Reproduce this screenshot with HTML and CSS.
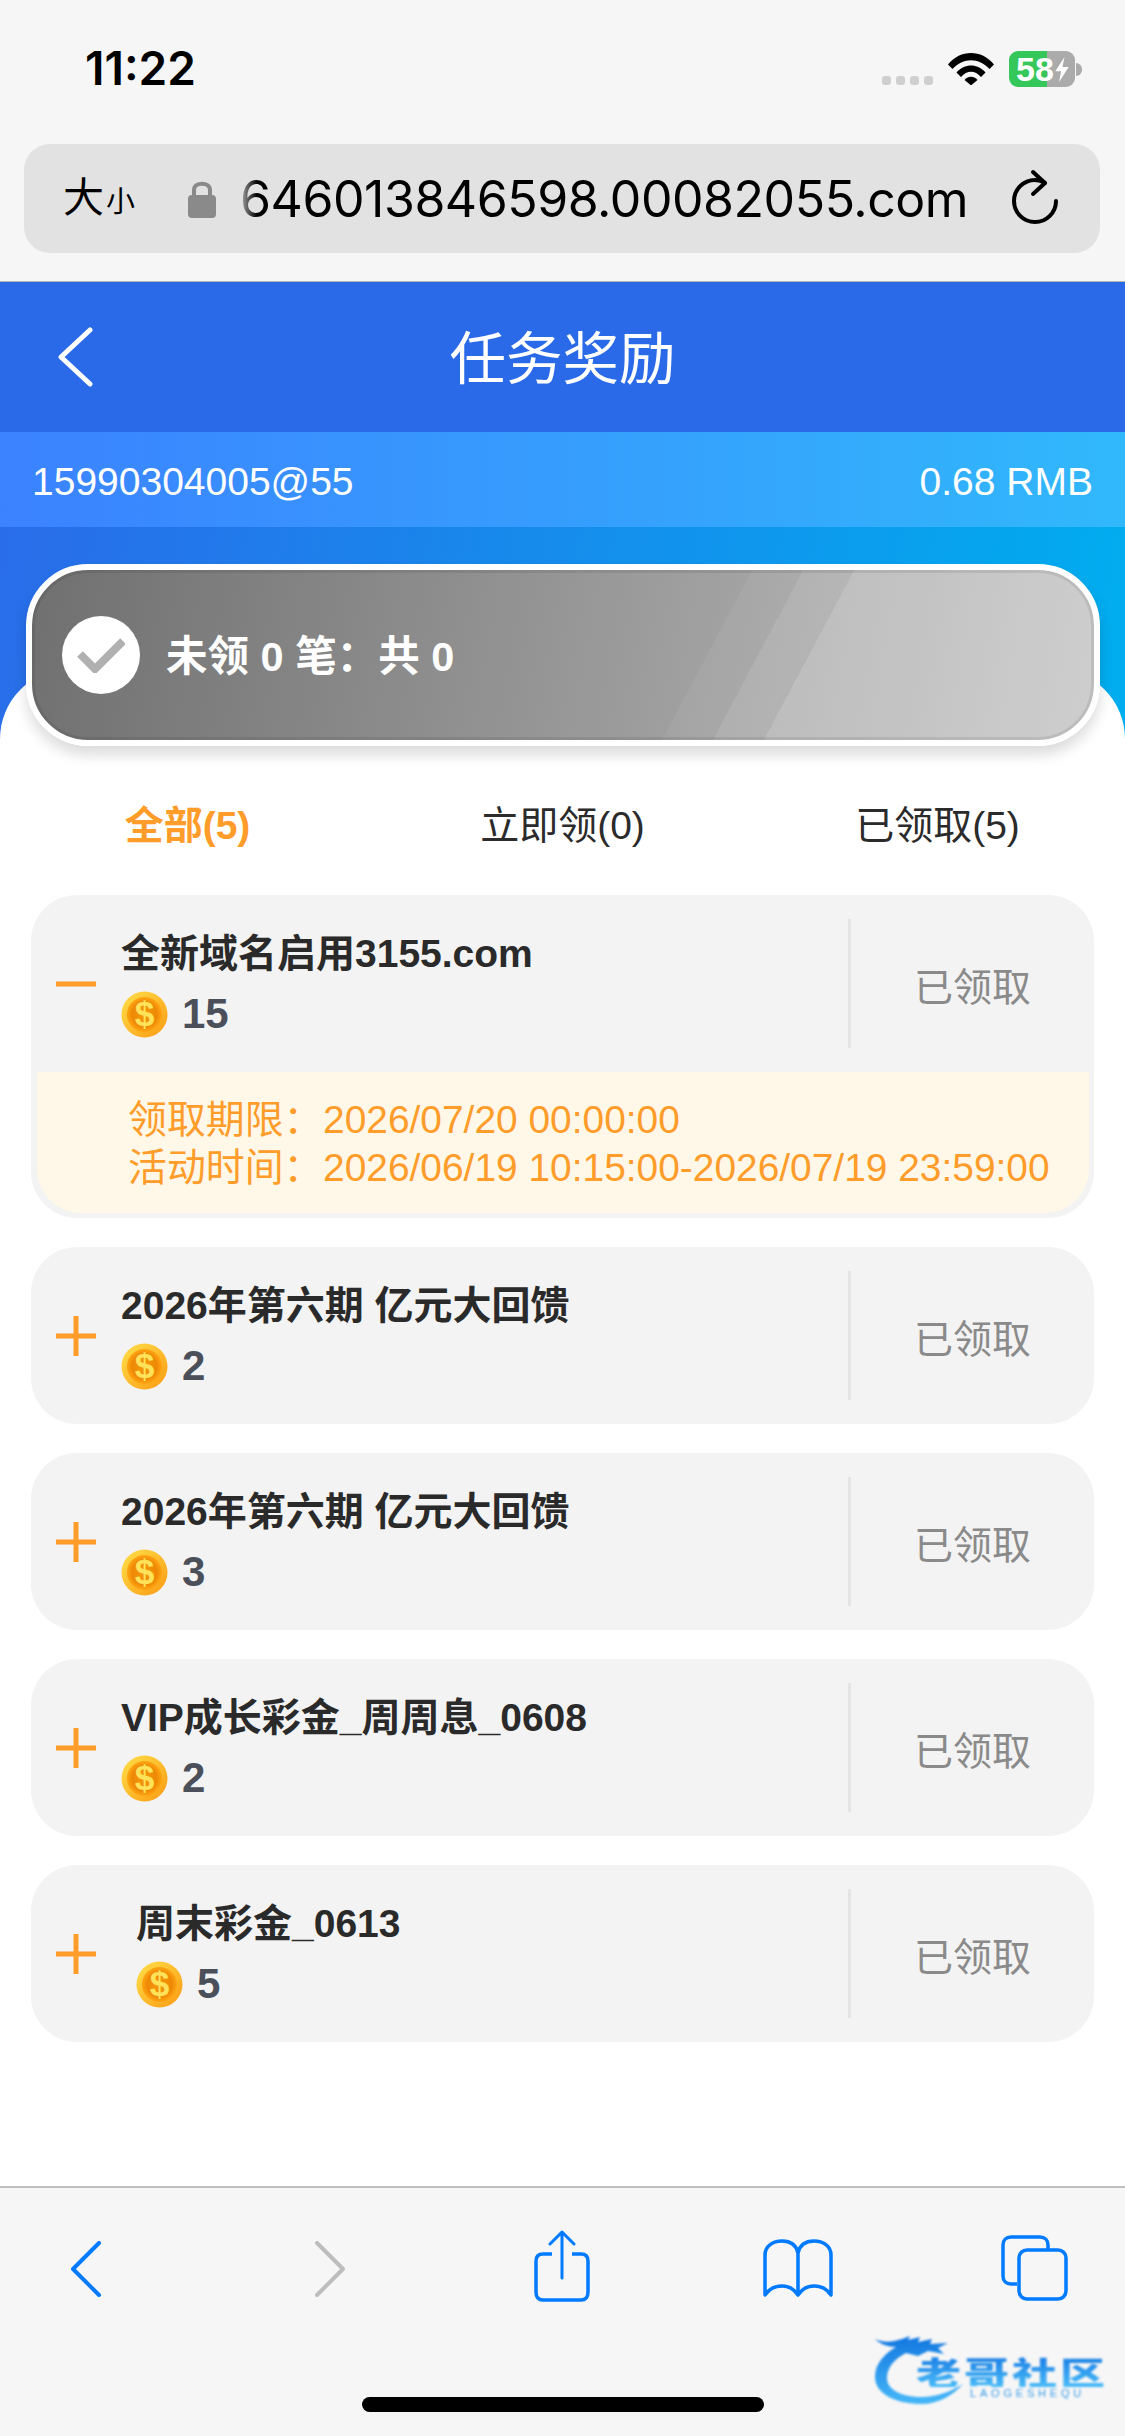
FILE: index.html
```html
<!DOCTYPE html>
<html lang="zh-CN">
<head>
    <meta charset="UTF-8">
    <meta name="viewport" content="width=device-width, initial-scale=1.0">
    <title>任务奖励</title>
    <link rel="stylesheet" href="styles.css">
</head>
<body>

    <svg class="defs" width="0" height="0">
        <defs>
            <radialGradient id="coinFace" cx="50%" cy="50%" r="50%">
                <stop offset="0" stop-color="#f59a0c"/>
                <stop offset="0.7" stop-color="#ee8806"/>
                <stop offset="1" stop-color="#ffa814"/>
            </radialGradient>
            <linearGradient id="coinRim" x1="0" y1="0" x2="1" y2="1">
                <stop offset="0" stop-color="#ffe04a"/>
                <stop offset="1" stop-color="#fb9a12"/>
            </linearGradient>
            <linearGradient id="logoArc" x1="0" y1="0" x2="0" y2="1">
                <stop offset="0" stop-color="#1277e0"/>
                <stop offset="1" stop-color="#46b8f8"/>
            </linearGradient>
            <symbol id="coin" viewBox="0 0 48 48">
                <circle cx="24" cy="24" r="23.5" fill="url(#coinRim)"/>
                <circle cx="24" cy="24" r="18" fill="url(#coinFace)"/>
                <text x="24" y="36" text-anchor="middle" class="coin-sign">$</text>
            </symbol>
            <symbol id="plus" viewBox="0 0 40 40">
                <path d="M0 20H40M20 0V40" stroke="#ff9c2a" stroke-width="5" fill="none"/>
            </symbol>
            <symbol id="minus" viewBox="0 0 40 40">
                <path d="M0 20H40" stroke="#ff9c2a" stroke-width="5" fill="none"/>
            </symbol>
        </defs>
    </svg>

    <!-- Barra do navegador -->
    <header class="browser-top">
        <div class="status-bar">
            <span class="clock">11:22</span>
            <div class="status-icons">
                <div class="signal"><i></i><i></i><i></i><i></i></div>
                <svg class="wifi" viewBox="0 0 46 33">
                    <path d="M0 12.5C12.5 -2.8 33.5 -2.8 46 12.5L41.5 17C31 5.2 15 5.2 4.5 17Z" fill="#000"/>
                    <path d="M8.5 20.5C16.5 11.2 29.5 11.2 37.5 20.5L33 25C27 18 19 18 13 25Z" fill="#000"/>
                    <path d="M16.5 28C20.2 23.6 25.8 23.6 29.5 28L23 33.4Z" fill="#000"/>
                </svg>
                <div class="battery">
                    <div class="battery-body">
                        <span class="battery-num">58</span>
                        <svg class="bolt" viewBox="0 0 16 30"><path d="M11 0L0 17H7L4.500 30L16 12H8.500Z" fill="#fff"/></svg>
                    </div>
                    <span class="battery-nub"></span>
                </div>
            </div>
        </div>
        <div class="url-bar">
            <span class="text-size">大<small>小</small></span>
            <svg class="lock" viewBox="0 0 28 38">
                <path d="M6 17V10C6 1.500 22 1.500 22 10V17" fill="none" stroke="#8a8a8a" stroke-width="4"/>
                <rect x="0" y="15" width="28" height="23" rx="4" fill="#8a8a8a"/>
            </svg>
            <div class="url-text">646013846598.00082055.com</div>
            <svg class="reload" viewBox="0 0 46 56">
                <path d="M44 32A21 21 0 1 1 23 11C27 11 30 12 33 14" fill="none" stroke="#000" stroke-width="4" stroke-linecap="round"/>
                <path d="M21 3L33 14L21 25" fill="none" stroke="#000" stroke-width="4" stroke-linecap="round" stroke-linejoin="round"/>
            </svg>
        </div>
    </header>

    <main class="page">
        <!-- Cabeçalho azul -->
        <section class="hero">
            <div class="nav-bar">
                <svg class="nav-back" viewBox="0 0 36 60">
                    <path d="M33 3L4 30L33 57" fill="none" stroke="#fff" stroke-width="5" stroke-linecap="round" stroke-linejoin="round"/>
                </svg>
                <h1>任务奖励</h1>
            </div>
            <div class="account-bar">
                <span>15990304005@55</span>
                <span>0.68 RMB</span>
            </div>
            <div class="summary">
                <span class="summary-check">
                    <svg viewBox="0 0 48 36">
                        <path d="M3 17L18 32L46 4" fill="none" stroke="#b0b0b0" stroke-width="8"/>
                    </svg>
                </span>
                <span class="summary-text">未领 0 笔：共 0</span>
            </div>
        </section>

        <section class="sheet">
            <div class="tabs">
                <span class="tab tab-active">全部(5)</span>
                <span class="tab">立即领(0)</span>
                <span class="tab">已领取(5)</span>
            </div>

            <div class="task-list">
                <article class="task">
                    <div class="task-row">
                        <svg class="toggle"><use href="#minus"/></svg>
                        <div class="task-info">
                            <div class="task-title">全新域名启用3155.com</div>
                            <div class="task-reward"><svg class="coin"><use href="#coin"/></svg><span>15</span></div>
                        </div>
                        <div class="task-state"><span>已领取</span></div>
                    </div>
                    <div class="task-detail">
                        <div class="detail-line"><span class="detail-label">领取期限：</span><span>2026/07/20 00:00:00</span></div>
                        <div class="detail-line"><span class="detail-label">活动时间：</span><span>2026/06/19 10:15:00-2026/07/19 23:59:00</span></div>
                    </div>
                </article>

                <article class="task">
                    <div class="task-row">
                        <svg class="toggle"><use href="#plus"/></svg>
                        <div class="task-info">
                            <div class="task-title">2026年第六期 亿元大回馈</div>
                            <div class="task-reward"><svg class="coin"><use href="#coin"/></svg><span>2</span></div>
                        </div>
                        <div class="task-state"><span>已领取</span></div>
                    </div>
                </article>

                <article class="task">
                    <div class="task-row">
                        <svg class="toggle"><use href="#plus"/></svg>
                        <div class="task-info">
                            <div class="task-title">2026年第六期 亿元大回馈</div>
                            <div class="task-reward"><svg class="coin"><use href="#coin"/></svg><span>3</span></div>
                        </div>
                        <div class="task-state"><span>已领取</span></div>
                    </div>
                </article>

                <article class="task">
                    <div class="task-row">
                        <svg class="toggle"><use href="#plus"/></svg>
                        <div class="task-info">
                            <div class="task-title">VIP成长彩金_周周息_0608</div>
                            <div class="task-reward"><svg class="coin"><use href="#coin"/></svg><span>2</span></div>
                        </div>
                        <div class="task-state"><span>已领取</span></div>
                    </div>
                </article>

                <article class="task">
                    <div class="task-row">
                        <svg class="toggle"><use href="#plus"/></svg>
                        <div class="task-info task-info-indent">
                            <div class="task-title">周末彩金_0613</div>
                            <div class="task-reward"><svg class="coin"><use href="#coin"/></svg><span>5</span></div>
                        </div>
                        <div class="task-state"><span>已领取</span></div>
                    </div>
                </article>
            </div>
        </section>
    </main>

    <!-- Barra inferior do navegador -->
    <footer class="toolbar">
        <div class="tool-icons">
            <svg class="tool tool-back" viewBox="0 0 30 56">
                <path d="M28 2L2 28L28 54" fill="none" stroke="#007aff" stroke-width="4" stroke-linecap="round" stroke-linejoin="round"/>
            </svg>
            <svg class="tool tool-forward" viewBox="0 0 30 56">
                <path d="M2 2L28 28L2 54" fill="none" stroke="#bdbdbd" stroke-width="4" stroke-linecap="round" stroke-linejoin="round"/>
            </svg>
            <svg class="tool tool-share" viewBox="0 0 56 72">
                <path d="M18 24H9C4.500 24 2 26.500 2 31V62C2 67 4.500 70 9 70H47C51.500 70 54 67 54 62V31C54 26.500 51.500 24 47 24H38" fill="none" stroke="#007aff" stroke-width="3.500"/>
                <path d="M28 48V2M16 14L28 2L40 14" fill="none" stroke="#007aff" stroke-width="3" stroke-linecap="round" stroke-linejoin="round"/>
            </svg>
            <svg class="tool tool-book" viewBox="0 0 70 58">
                <path d="M35 14C33 5 26 2 19 2C10 2 2 7 2 16V56C6 50 12 47 19 47C26 47 31 50 35 56C39 50 44 47 51 47C58 47 64 50 68 56V16C68 7 60 2 51 2C44 2 37 5 35 14V56" fill="none" stroke="#007aff" stroke-width="3.500" stroke-linejoin="round"/>
            </svg>
            <svg class="tool tool-tabs" viewBox="0 0 67 66">
                <path d="M16 49H10C5 49 2 46 2 41V10C2 5 5 2 10 2H39C44 2 47 5 47 10V15" fill="none" stroke="#007aff" stroke-width="3.500"/>
                <rect x="18" y="15" width="47" height="49" rx="8" fill="none" stroke="#007aff" stroke-width="3.500"/>
            </svg>
        </div>
        <div class="toolbar-bottom">
            <span class="home-bar"></span>
            <div class="logo">
                <svg class="logo-mark" viewBox="0 0 110 72">
                    <path d="M3 5C12 9 20 8 30 5L38 2L36 6L48 3L46 8L60 5L58 10L76 9L66 14L72 20L56 17L46 22L34 19C22 25 15 34 15 44C15 56 30 63 50 63C64 63 78 58 91 50C80 62 66 70 50 70C24 70 3 60 3 43C3 30 12 20 24 13C16 13 8 10 3 5Z" fill="url(#logoArc)"/>
                </svg>
                <div class="logo-text">
                    <span class="logo-name">老哥社区</span>
                    <span class="logo-pinyin">LAOGESHEQU</span>
                </div>
            </div>
        </div>
    </footer>

</body>
</html>
```

FILE: styles.css
```css
/* Geral */
* {
    box-sizing: border-box;
}

body {
    font-family: "Liberation Sans", "Noto Sans CJK SC", sans-serif;
    background-color: #fff;
    margin: 0;
    padding: 0;
    width: 1125px;
    height: 2436px;
    overflow: hidden;
    display: flex;
    flex-direction: column;
}

.defs {
    display: block;
    height: 0;
}

.coin-sign {
    font-family: "Liberation Sans", sans-serif;
    font-size: 36px;
    font-weight: bold;
    fill: #ffe25a;
}

/* Barra do navegador */
.browser-top {
    height: 282px;
    background-color: #f6f6f6;
    border-bottom: 1px solid #b5b5b5;
    flex: none;
}

.status-bar {
    height: 144px;
    padding: 0 43px 0 85px;
    display: flex;
    justify-content: space-between;
}

.clock {
    font-family: "Inter", sans-serif;
    font-size: 46px;
    font-weight: 600;
    line-height: 44px;
    margin-top: 46px;
    color: #000;
    letter-spacing: 0;
}

.status-icons {
    display: flex;
    align-items: flex-start;
    padding-top: 51px;
}

.signal {
    display: flex;
    gap: 5px;
    margin-top: 25px;
    margin-right: 15px;
}

.signal i {
    width: 9px;
    height: 9px;
    border-radius: 3px;
    background-color: #cfcfcf;
}

.wifi {
    width: 46px;
    height: 33px;
    margin-top: 1px;
    margin-right: 15px;
}

.battery {
    display: flex;
    align-items: center;
}

.battery-body {
    width: 66px;
    height: 36px;
    border-radius: 9px;
    background: linear-gradient(to right, #35c759 38px, #ababab 38px);
    display: flex;
    align-items: center;
    padding-left: 7px;
}

.battery-num {
    font-size: 34px;
    font-weight: bold;
    line-height: 36px;
    color: #fff;
}

.bolt {
    width: 16px;
    height: 25px;
}

.battery-nub {
    width: 6px;
    height: 13px;
    border-radius: 0 6px 6px 0;
    background-color: #ababab;
    margin-left: 1px;
}

.url-bar {
    height: 109px;
    margin: 0 25px 0 24px;
    background-color: #e2e2e2;
    border-radius: 26px;
    display: flex;
    align-items: center;
    padding-left: 39px;
    color: #000;
}

.text-size {
    font-size: 41px;
    width: 125px;
    flex: none;
    line-height: 1;
}

.text-size small {
    font-size: 29px;
    margin-left: 2px;
}

.lock {
    width: 28px;
    height: 38px;
    flex: none;
    margin-right: 15px;
}

.url-text {
    width: 748px;
    padding-left: 9px;
    flex: none;
    overflow: hidden;
    white-space: nowrap;
    font-family: "Inter", sans-serif;
    font-size: 50px;
    letter-spacing: -0.45px;
    line-height: 60px;
    -webkit-mask-image: linear-gradient(to right, transparent 4px, #000 26px);
    mask-image: linear-gradient(to right, transparent 4px, #000 26px);
}

.reload {
    width: 46px;
    height: 56px;
    flex: none;
    margin-left: 33px;
    margin-top: -3px;
}

/* Área principal */
.page {
    flex: 1;
    min-height: 0;
}

.hero {
    background: linear-gradient(100deg, #2b6ae9 0%, #00aeef 100%);
    padding-bottom: 1px;
}

.nav-bar {
    height: 150px;
    padding-bottom: 6px;
    background-color: #2a6ae8;
    display: flex;
    align-items: center;
    justify-content: center;
    position: relative;
}

.nav-bar h1 {
    margin: 0;
    font-size: 56.500px;
    font-weight: normal;
    color: #fff;
}

.nav-back {
    position: absolute;
    left: 57px;
    top: 45px;
    width: 36px;
    height: 60px;
}

.account-bar {
    height: 95px;
    padding: 5px 32px 0 32px;
    background: linear-gradient(to right, #3b82ff, #31b8fb);
    display: flex;
    align-items: center;
    justify-content: space-between;
    font-size: 39px;
    color: #fff;
}

.summary {
    position: relative;
    z-index: 1;
    height: 182px;
    margin: 37px 25px 0 26px;
    border: 6px solid #fff;
    border-radius: 62px;
    box-shadow: 0 9px 14px rgba(0, 0, 0, 0.14), inset 0 0 0 3px rgba(0, 0, 0, 0.08);
    background:
        linear-gradient(118deg, transparent 636px, rgba(255, 255, 255, 0.05) 636px, rgba(255, 255, 255, 0.05) 681px, rgba(255, 255, 255, 0.14) 681px, rgba(255, 255, 255, 0.14) 726px, rgba(255, 255, 255, 0.26) 726px),
        linear-gradient(100deg, #707070 0%, #bdbdbd 100%);
    display: flex;
    align-items: center;
    padding-left: 30px;
}

.summary-check {
    width: 78px;
    height: 78px;
    border-radius: 50%;
    background-color: #fff;
    display: flex;
    align-items: center;
    justify-content: center;
    margin-right: 26px;
}

.summary-check svg {
    width: 48px;
    height: 36px;
}

.summary-text {
    font-size: 41.500px;
    font-weight: bold;
    color: #fff;
    margin-bottom: 4px;
}

.sheet {
    position: relative;
    margin-top: -78px;
    padding-top: 109px;
    background-color: #fff;
    border-radius: 70px 70px 0 0;
}

/* Abas */
.tabs {
    display: grid;
    grid-template-columns: repeat(3, 1fr);
    height: 96px;
    margin-bottom: 21px;
}

.tab {
    text-align: center;
    font-size: 39px;
    line-height: 96px;
    color: #2b2b2b;
}

.tab-active {
    color: #ff9c2a;
    font-weight: bold;
}

/* Cartões */
.task-list {
    display: flex;
    flex-direction: column;
    gap: 29px;
    margin: 0 31px;
}

.task {
    background-color: #f3f3f3;
    border-radius: 46px;
    overflow: hidden;
}

.task-row {
    height: 177px;
    display: flex;
    align-items: center;
}

.toggle {
    width: 40px;
    height: 40px;
    flex: none;
    margin-left: 25px;
    margin-right: 25px;
}

.task-info {
    flex: 1;
    align-self: flex-start;
    padding-top: 35px;
}

.task-info-indent {
    padding-left: 15px;
}

.task-title {
    font-size: 39px;
    font-weight: bold;
    line-height: 48px;
    color: #2a2a2a;
}

.task-reward {
    display: flex;
    align-items: center;
    height: 48px;
    margin-top: 12px;
    font-size: 42px;
    font-weight: bold;
    color: #4a4f5a;
}

.coin {
    width: 47px;
    height: 47px;
    margin-right: 14px;
}

.task-state {
    width: 246px;
    height: 129px;
    flex: none;
    border-left: 3px solid #e4e4e4;
    display: flex;
    align-items: center;
    justify-content: center;
    font-size: 39px;
    color: #8a8a8a;
}

.task-detail {
    margin: 0 5px 5px 6px;
    padding: 24px 0 21px 91px;
    background-color: #fff8e8;
    border-radius: 0 0 44px 44px;
    font-size: 38.900px;
    line-height: 48px;
    color: #ff9c2a;
}

.detail-line {
    display: flex;
    white-space: nowrap;
}

.detail-label {
    flex: none;
    width: 195px;
}

/* Barra inferior */
.toolbar {
    height: 250px;
    flex: none;
    background-color: #f6f6f6;
    border-top: 2px solid #bfbfbf;
}

.tool-icons {
    display: flex;
    align-items: flex-start;
    height: 146px;
    padding-top: 42px;
}

.tool {
    flex: none;
}

.tool-back {
    width: 30px;
    height: 56px;
    margin: 11px 0 0 71px;
}

.tool-forward {
    width: 30px;
    height: 56px;
    margin: 11px 0 0 214px;
}

.tool-share {
    width: 56px;
    height: 72px;
    margin: 0 0 0 189px;
}

.tool-book {
    width: 70px;
    height: 58px;
    margin: 9px 0 0 173px;
}

.tool-tabs {
    width: 67px;
    height: 66px;
    margin: 5px 0 0 168px;
}

.toolbar-bottom {
    position: relative;
    height: 102px;
    padding: 63px 0 0 362px;
}

.home-bar {
    display: block;
    width: 402px;
    height: 15px;
    border-radius: 8px;
    background-color: #000;
}

/* Marca d'água */
.logo {
    position: absolute;
    left: 872px;
    top: 0;
    width: 236px;
    height: 76px;
    filter: blur(0.8px);
}

.logo-mark {
    display: block;
    width: 110px;
    height: 72px;
}

.logo-text {
    position: absolute;
    left: 44px;
    top: 16px;
    display: flex;
    flex-direction: column;
}

.logo-name {
    font-family: "Noto Sans CJK SC", sans-serif;
    font-size: 45px;
    font-weight: 900;
    letter-spacing: 3px;
    line-height: 44px;
    white-space: nowrap;
    transform: scaleY(0.7);
    background: linear-gradient(to bottom, #1a7fe6, #4abcf8);
    -webkit-background-clip: text;
    background-clip: text;
    color: transparent;
}

.logo-pinyin {
    margin: -7px 0 0 54px;
    font-size: 11px;
    letter-spacing: 3.800px;
    line-height: 12px;
    color: #3a9eea;
}
```
